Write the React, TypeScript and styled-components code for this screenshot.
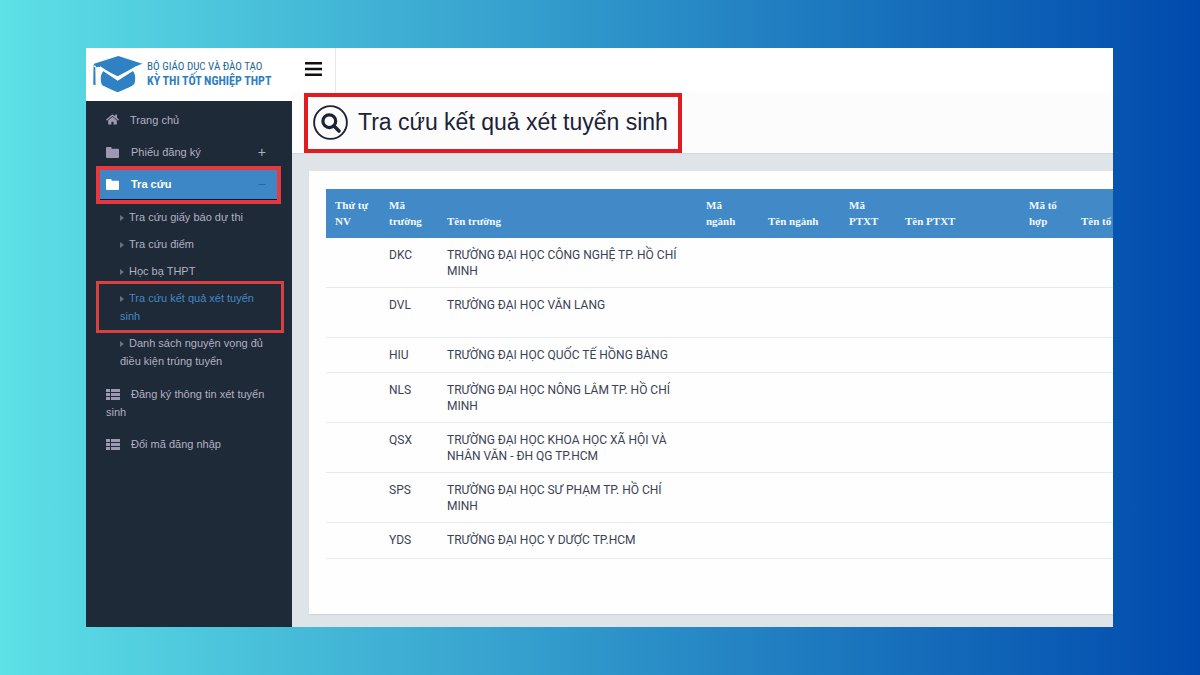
import React from "react";
import styled, { createGlobalStyle, css } from "styled-components";
import { FaHome } from "react-icons/fa";

const sans = `"Liberation Sans", Arial, sans-serif`;
const serif = `"Liberation Serif", "Times New Roman", serif`;

const GlobalStyle = createGlobalStyle`
  *, *::before, *::after { box-sizing: border-box; }
  body {
    margin: 0;
    font-family: ${sans};
    font-size: 11px;
    line-height: 18px;
    color: #3a4254;
  }
`;

const Backdrop = styled.div`
  min-height: 100vh;
  padding: 48px 87px 48px 86px;
  background: linear-gradient(90deg, #5de0e6, #004aad);
`;

const Portal = styled.div`
  display: flex;
  overflow: hidden;
  background: #dfe4e8;
`;

const Sidebar = styled.aside`
  flex: 0 0 206px;
  background: #1e2a38;
`;

const Brand = styled.a`
  display: flex;
  align-items: center;
  gap: 4px;
  height: 53px;
  padding: 0 0 2px 7px;
  background: #fff;
  color: #2f7fc0;
  text-decoration: none;
  white-space: nowrap;
`;

const BrandText = styled.span`
  display: flex;
  flex-direction: column;
  font-family: "Roboto Condensed", "Liberation Sans Narrow", ${sans};
  line-height: 15px;
`;

const Ministry = styled.span`
  font-size: 11px;
  color: #1f6798;
`;

const Exam = styled.strong`
  font-size: 12px;
`;

const NavList = styled.ul`
  list-style: none;
  margin: 0;
  padding: 3px 11px 0 10px;
`;

const highlight = css<{ $inset: string; $width: number; $tone: string }>`
  position: relative;
  &::after {
    content: "";
    position: absolute;
    inset: ${(p) => p.$inset};
    border: ${(p) => p.$width}px solid ${(p) => p.$tone};
    pointer-events: none;
  }
`;

const NavItem = styled.li``;

const navEntry = css`
  width: 100%;
  padding: 7px 10px;
  color: #b3b0c2;
  font: inherit;
  text-align: left;
`;

const NavLink = styled.a`
  ${navEntry}
  display: block;
  text-decoration: none;
  svg { margin-right: 11px; color: #9d99b3; vertical-align: -2px; }
`;

const NavToggle = styled.button<{ $open?: boolean }>`
  ${navEntry}
  display: flex;
  align-items: center;
  border: 0;
  background: none;
  svg { margin-right: 12px; color: #9d99b3; }
  ${(p) =>
    p.$open &&
    css`
      background: #3d87c7;
      color: #fff;
      font-weight: bold;
      box-shadow: inset 0 -1px #0d1740;
      svg { color: #fff; }
    `}
`;

const ToggleFrame = styled.div`
  ${highlight}
`;

const Sign = styled.span<{ $dim?: boolean }>`
  margin-left: auto;
  padding-right: 5px;
  font-size: 14px;
  font-weight: normal;
  color: ${(p) => (p.$dim ? "#2a649b" : "#a9b0bd")};
`;

const SubList = styled.ul`
  display: flex;
  flex-direction: column;
  gap: 9px;
  list-style: none;
  margin: 0;
  padding: 8px 8px 8px 24px;
`;

const SubItem = styled.li``;

const FramedSubItem = styled.li`
  ${highlight}
`;

const SubLink = styled.a<{ $current?: boolean }>`
  display: block;
  color: ${(p) => (p.$current ? "#4189c7" : "#b3b0c2")};
  text-decoration: none;
  svg { margin-right: 5px; color: #67717f; }
`;

const Main = styled.main`
  flex: 1;
  min-width: 0;
`;

const TopBar = styled.div`
  display: flex;
  height: 44px;
  background: #fff;
`;

const MenuButton = styled.button`
  display: grid;
  place-items: center;
  width: 44px;
  padding: 0 0 2px;
  border: 0;
  border-right: 1px solid #e4e6e9;
  background: none;
  color: #111;
`;

const TitleBar = styled.header`
  display: flex;
  height: 62px;
  padding: 1px 12px 0;
  border-bottom: 1px solid #d3d9de;
  background: #fcfcfd;
`;

const TitleFrame = styled.div`
  display: flex;
  align-items: center;
  gap: 10px;
  padding: 0 10px 2px 5px;
  border: 4px solid #e01b22;
  color: #1b2336;
  white-space: nowrap;
`;

const Title = styled.h1`
  margin: 0;
  font-size: 23px;
  font-weight: normal;
  line-height: 28px;
`;

const Content = styled.section`
  padding: 17px 0 13px 17px;
`;

const Card = styled.div`
  overflow: hidden;
  padding: 18px 0 55px 17px;
  background: #fefefe;
  box-shadow: 0 1px 1px #cdd4da;
`;

const Results = styled.table`
  width: 100%;
  table-layout: fixed;
  border-collapse: separate;
  border-spacing: 0;
  font-family: Roboto, ${sans};
  font-size: 12px;
  line-height: 16px;
`;

const HeadCell = styled.th`
  height: 49px;
  padding: 8px 0 9px 9px;
  background: #4189c7;
  color: #f2f8fc;
  font-family: ${serif};
  font-size: 11px;
  font-weight: bold;
  text-align: left;
  vertical-align: bottom;
  &:not(:last-child) { padding-right: 7px; }
`;

const Cell = styled.td<{ $height: number }>`
  height: ${(p) => p.$height}px;
  padding: 9px 9px 8px;
  border-bottom: 1px solid #e6e9ed;
  vertical-align: top;
`;

const CapLogo = () => (
  <svg width="50" height="38" viewBox="0 0 150 114" aria-hidden="true">
    <path d="M3 26 76 3l72 23-12 5-62 33L16 35l-7 2v52H1V34z" fill="#2f81c4" />
    <path d="M1 32h8v4L8 88H1z" fill="#fff" />
    <path d="M2 36h5v50l-4 5-2-5z" fill="#2f81c4" />
    <path d="M32 47c-8 8-10 19-8 33 1 8 4 11 10 14 13 7 24 11 40 18 15-7 28-11 41-18 7-4 10-7 11-15 2-14 0-25-7-32L74 75z" fill="#2f81c4" />
    <path d="m20 37 54 36 58-37" fill="none" stroke="#fff" strokeWidth="7" />
  </svg>
);

const FolderIcon = () => (
  <svg width="13" height="11" viewBox="0 0 13 11" fill="currentColor" aria-hidden="true">
    <path d="M1 0h3.6a1 1 0 0 1 1 1v.7H12a1 1 0 0 1 1 1V10a1 1 0 0 1-1 1H1a1 1 0 0 1-1-1V1a1 1 0 0 1 1-1z" />
  </svg>
);

const ListIcon = () => (
  <svg width="14" height="11" viewBox="0 0 14 11" fill="currentColor" aria-hidden="true">
    <path d="M0 0h4v3H0zM5 0h9v3H5zM0 4h4v3H0zM5 4h9v3H5zM0 8h4v3H0zM5 8h9v3H5z" />
  </svg>
);

const Caret = () => (
  <svg width="4" height="6" viewBox="0 0 4 6" fill="currentColor" aria-hidden="true">
    <path d="M0 0 4 3 0 6z" />
  </svg>
);

const MenuIcon = () => (
  <svg width="17" height="14" viewBox="0 0 17 14" fill="currentColor" aria-hidden="true">
    <path d="M0 0h17v2.4H0zM0 5.8h17v2.4H0zM0 11.6h17V14H0z" />
  </svg>
);

const SearchIcon = () => (
  <svg width="35" height="35" viewBox="0 0 35 35" fill="none" stroke="currentColor" aria-hidden="true">
    <circle cx="17.5" cy="17.5" r="16.4" strokeWidth="1.9" />
    <circle cx="16.3" cy="16.2" r="6.4" strokeWidth="3.2" />
    <path d="m21 21 5 5" strokeWidth="3.6" strokeLinecap="round" />
  </svg>
);

const columns: { label: string; width?: number }[] = [
  { label: "Thứ tự NV", width: 54 },
  { label: "Mã trường", width: 58 },
  { label: "Tên trường", width: 259 },
  { label: "Mã ngành", width: 62 },
  { label: "Tên ngành", width: 81 },
  { label: "Mã PTXT", width: 56 },
  { label: "Tên PTXT", width: 124 },
  { label: "Mã tổ hợp", width: 52 },
  { label: "Tên tổ" },
];

const schools = [
  { code: "DKC", name: "TRƯỜNG ĐẠI HỌC CÔNG NGHỆ TP. HỒ CHÍ MINH", height: 50 },
  { code: "DVL", name: "TRƯỜNG ĐẠI HỌC VĂN LANG", height: 50 },
  { code: "HIU", name: "TRƯỜNG ĐẠI HỌC QUỐC TẾ HỒNG BÀNG", height: 35 },
  { code: "NLS", name: "TRƯỜNG ĐẠI HỌC NÔNG LÂM TP. HỒ CHÍ MINH", height: 50 },
  { code: "QSX", name: "TRƯỜNG ĐẠI HỌC KHOA HỌC XÃ HỘI VÀ NHÂN VĂN - ĐH QG TP.HCM", height: 50 },
  { code: "SPS", name: "TRƯỜNG ĐẠI HỌC SƯ PHẠM TP. HỒ CHÍ MINH", height: 50 },
  { code: "YDS", name: "TRƯỜNG ĐẠI HỌC Y DƯỢC TP.HCM", height: 36 },
];

export default function App() {
  return (
    <>
      <GlobalStyle />
      <Backdrop>
        <Portal>
          <Sidebar>
            <Brand href="#">
              <CapLogo />
              <BrandText>
                <Ministry>BỘ GIÁO DỤC VÀ ĐÀO TẠO</Ministry>
                <Exam>KỲ THI TỐT NGHIỆP THPT</Exam>
              </BrandText>
            </Brand>
            <nav>
              <NavList>
                <NavItem>
                  <NavLink href="#"><FaHome size={13} />Trang chủ</NavLink>
                </NavItem>
                <NavItem>
                  <NavToggle type="button" aria-expanded={false}>
                    <FolderIcon />Phiếu đăng ký<Sign>+</Sign>
                  </NavToggle>
                </NavItem>
                <NavItem>
                  <ToggleFrame $inset="-2px 0 -4px" $width={4} $tone="#e8383d">
                    <NavToggle type="button" aria-expanded $open>
                      <FolderIcon />Tra cứu<Sign $dim>−</Sign>
                    </NavToggle>
                  </ToggleFrame>
                  <SubList>
                    <SubItem><SubLink href="#"><Caret />Tra cứu giấy báo dự thi</SubLink></SubItem>
                    <SubItem><SubLink href="#"><Caret />Tra cứu điểm</SubLink></SubItem>
                    <SubItem><SubLink href="#"><Caret />Học bạ THPT</SubLink></SubItem>
                    <FramedSubItem $inset="-8px -11px -8px -24px" $width={3} $tone="#d9403f">
                      <SubLink href="#" $current aria-current="page">
                        <Caret />Tra cứu kết quả xét tuyển sinh
                      </SubLink>
                    </FramedSubItem>
                    <SubItem>
                      <SubLink href="#"><Caret />Danh sách nguyện vọng đủ điều kiện trúng tuyển</SubLink>
                    </SubItem>
                  </SubList>
                </NavItem>
                <NavItem>
                  <NavLink href="#"><ListIcon />Đăng ký thông tin xét tuyển sinh</NavLink>
                </NavItem>
                <NavItem>
                  <NavLink href="#"><ListIcon />Đổi mã đăng nhập</NavLink>
                </NavItem>
              </NavList>
            </nav>
          </Sidebar>
          <Main>
            <TopBar>
              <MenuButton type="button" aria-label="Menu"><MenuIcon /></MenuButton>
            </TopBar>
            <TitleBar>
              <TitleFrame>
                <SearchIcon />
                <Title>Tra cứu kết quả xét tuyển sinh</Title>
              </TitleFrame>
            </TitleBar>
            <Content>
              <Card>
                <Results>
                  <colgroup>
                    {columns.map((c) => <col key={c.label} width={c.width} />)}
                  </colgroup>
                  <thead>
                    <tr>
                      {columns.map((c) => <HeadCell key={c.label} scope="col">{c.label}</HeadCell>)}
                    </tr>
                  </thead>
                  <tbody>
                    {schools.map((s) => (
                      <tr key={s.code}>
                        <Cell $height={s.height} />
                        <Cell $height={s.height}>{s.code}</Cell>
                        <Cell $height={s.height}>{s.name}</Cell>
                        {columns.slice(3).map((c) => <Cell key={c.label} $height={s.height} />)}
                      </tr>
                    ))}
                  </tbody>
                </Results>
              </Card>
            </Content>
          </Main>
        </Portal>
      </Backdrop>
    </>
  );
}
